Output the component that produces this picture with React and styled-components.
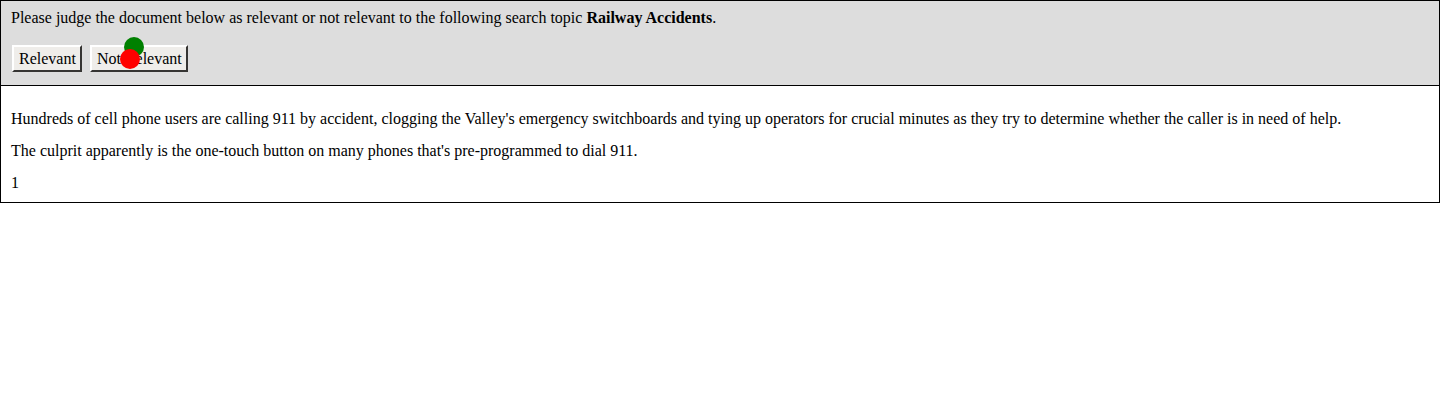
import React from "react";
import styled, { createGlobalStyle } from "styled-components";

const GlobalStyle = createGlobalStyle`
  body {
    margin: 0;
    background: #ffffff;
    font-family: "Liberation Serif", "Times New Roman", serif;
    font-size: 16px;
    color: #000000;
  }
`;

const Frame = styled.div`
  border: 1px solid #000000;
`;

const Header = styled.div`
  position: relative;
  background: #dddddd;
  padding: 8px 10px 13px;
  border-bottom: 1px solid #000000;
  line-height: 18px;
`;

const Prompt = styled.div`
  margin-bottom: 18px;
`;

const ButtonRow = styled.div`
  display: flex;
  gap: 8px;
  padding-left: 1px;
`;

const JudgeButton = styled.button`
  height: 27px;
  padding: 0 4px 0 5px;
  background: #efedea;
  border: 2px outset #d8d6d2;
  border-color: #ffffff #8a8884 #8a8884 #ffffff;
  font-family: "Liberation Serif", "Times New Roman", serif;
  font-size: 16px;
  color: #000000;
  cursor: pointer;
`;

const Dot = styled.span`
  position: absolute;
  width: 20px;
  height: 20px;
  border-radius: 50%;
  background: ${(p) => p.$color};
  left: ${(p) => p.$x - 10}px;
  top: ${(p) => p.$y - 10}px;
`;

const Body = styled.div`
  padding: 10px 10px 10px;
  line-height: 18px;
`;

const Para = styled.p`
  margin: 14px 0;
`;

const PageNumber = styled.div``;

export default function App() {
  return (
    <>
      <GlobalStyle />
      <Frame>
        <Header>
          <Prompt>
            Please judge the document below as relevant or not relevant to the following search topic{" "}
            <b>Railway Accidents</b>.
          </Prompt>
          <ButtonRow>
            <JudgeButton>Relevant</JudgeButton>
            <JudgeButton>Not Relevant</JudgeButton>
          </ButtonRow>
          <Dot $color="#008000" $x={133} $y={46} />
          <Dot $color="#ff0000" $x={129} $y={58} />
        </Header>
        <Body>
          <Para>
            Hundreds of cell phone users are calling 911 by accident, clogging the Valley's emergency switchboards and
            tying up operators for crucial minutes as they try to determine whether the caller is in need of help.
          </Para>
          <Para>The culprit apparently is the one-touch button on many phones that's pre-programmed to dial 911.</Para>
          <PageNumber>1</PageNumber>
        </Body>
      </Frame>
    </>
  );
}
